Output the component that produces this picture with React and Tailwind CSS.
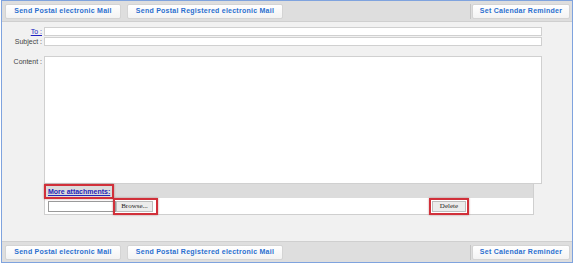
import React from "react";

function Btn({ children, w }) {
  return (
    <div
      className={`h-[15px] ${w} flex items-center justify-center rounded-[2px] border border-[#d4d4d4] bg-gradient-to-b from-white to-[#f3f3f3] text-[7px] font-bold tracking-[0.25px] text-[#2b6fcf] whitespace-nowrap`}
      style={{ fontFamily: '"Liberation Sans", Arial, sans-serif' }}
    >
      {children}
    </div>
  );
}

function Bar({ bottom }) {
  return (
    <div
      className={`h-[21px] shrink-0 bg-[#dedede] flex items-center pl-[3px] pr-[2px] ${
        bottom ? "border-t border-[#cfcfcf]" : "border-b border-[#cfcfcf]"
      }`}
    >
      <Btn w="w-[116px]">Send Postal electronic Mail</Btn>
      <div className="w-[6px]" />
      <Btn w="w-[156px]">Send Postal Registered electronic Mail</Btn>
      <div className="flex-1" />
      <div className="w-px h-[15px] bg-[#c4c4c4] mr-[1px]" />
      <Btn w="w-[98px]">Set Calendar Reminder</Btn>
    </div>
  );
}

export default function App() {
  const sans = { fontFamily: '"Liberation Sans", Arial, sans-serif' };
  return (
    <div className="w-[575px] h-[264px] bg-white">
      <div className="ml-[1px] w-[572px] h-[263px] border border-[#7fa3de] bg-[#f1f1f1] flex flex-col">
        <Bar />
        <div className="flex-1 flex flex-col pt-[5px]" style={sans}>
          <div className="flex items-center h-[9px]">
            <div className="w-[42px] pr-[2px] text-right text-[7px] leading-none">
              <a className="text-[#2020c0] underline">To :</a>
            </div>
            <div className="w-[498px] h-[9px] bg-white border border-[#d0d0d0]" />
          </div>
          <div className="flex items-center h-[9px] mt-[1px]">
            <div className="w-[42px] pr-[2px] text-right text-[7px] leading-none text-[#444]">
              Subject :
            </div>
            <div className="w-[498px] h-[9px] bg-white border border-[#d0d0d0]" />
          </div>
          <div className="flex items-start mt-[10px]">
            <div className="w-[42px] pr-[2px] pt-[2px] text-right text-[7px] leading-none text-[#444]">
              Content :
            </div>
            <div className="w-[498px] h-[128px] bg-white border border-[#d0d0d0]" />
          </div>
          <div className="ml-[42px] w-[490px] border border-[#cfcfcf] border-t-0">
            <div className="h-[14px] bg-[#dcdcdc] flex items-center">
              <div className="relative ml-[3px] text-[7px] font-bold text-[#2424b8] underline leading-none">
                More attachments:
                <div className="absolute -left-[4px] -top-[4px] w-[70px] h-[15px] border-2 border-[#d1303a] shadow-[0_0_2px_rgba(120,0,0,0.4)]" />
              </div>
            </div>
            <div className="h-[16px] bg-white flex items-center">
              <div className="ml-[3px] w-[68px] h-[11px] border border-[#9a9a9a] bg-white" />
              <div className="relative">
                <div
                  className="w-[37px] h-[11px] border border-[#bdbdbd] bg-[#ececec] text-[7px] text-[#222] flex items-center justify-center"
                  style={{ fontFamily: '"Liberation Serif", serif' }}
                >
                  Browse...
                </div>
                <div className="absolute -left-[3px] -top-[3px] w-[45px] h-[17px] border-2 border-[#d1303a] shadow-[0_0_2px_rgba(120,0,0,0.4)]" />
              </div>
              <div className="flex-1" />
              <div className="relative mr-[67px]">
                <div
                  className="w-[34px] h-[11px] border border-[#bdbdbd] bg-[#ececec] text-[7px] text-[#222] flex items-center justify-center"
                  style={{ fontFamily: '"Liberation Serif", serif' }}
                >
                  Delete
                </div>
                <div className="absolute -left-[3px] -top-[3px] w-[40px] h-[17px] border-2 border-[#d1303a] shadow-[0_0_2px_rgba(120,0,0,0.4)]" />
              </div>
            </div>
          </div>
          <div className="flex-1" />
        </div>
        <Bar bottom />
      </div>
    </div>
  );
}
